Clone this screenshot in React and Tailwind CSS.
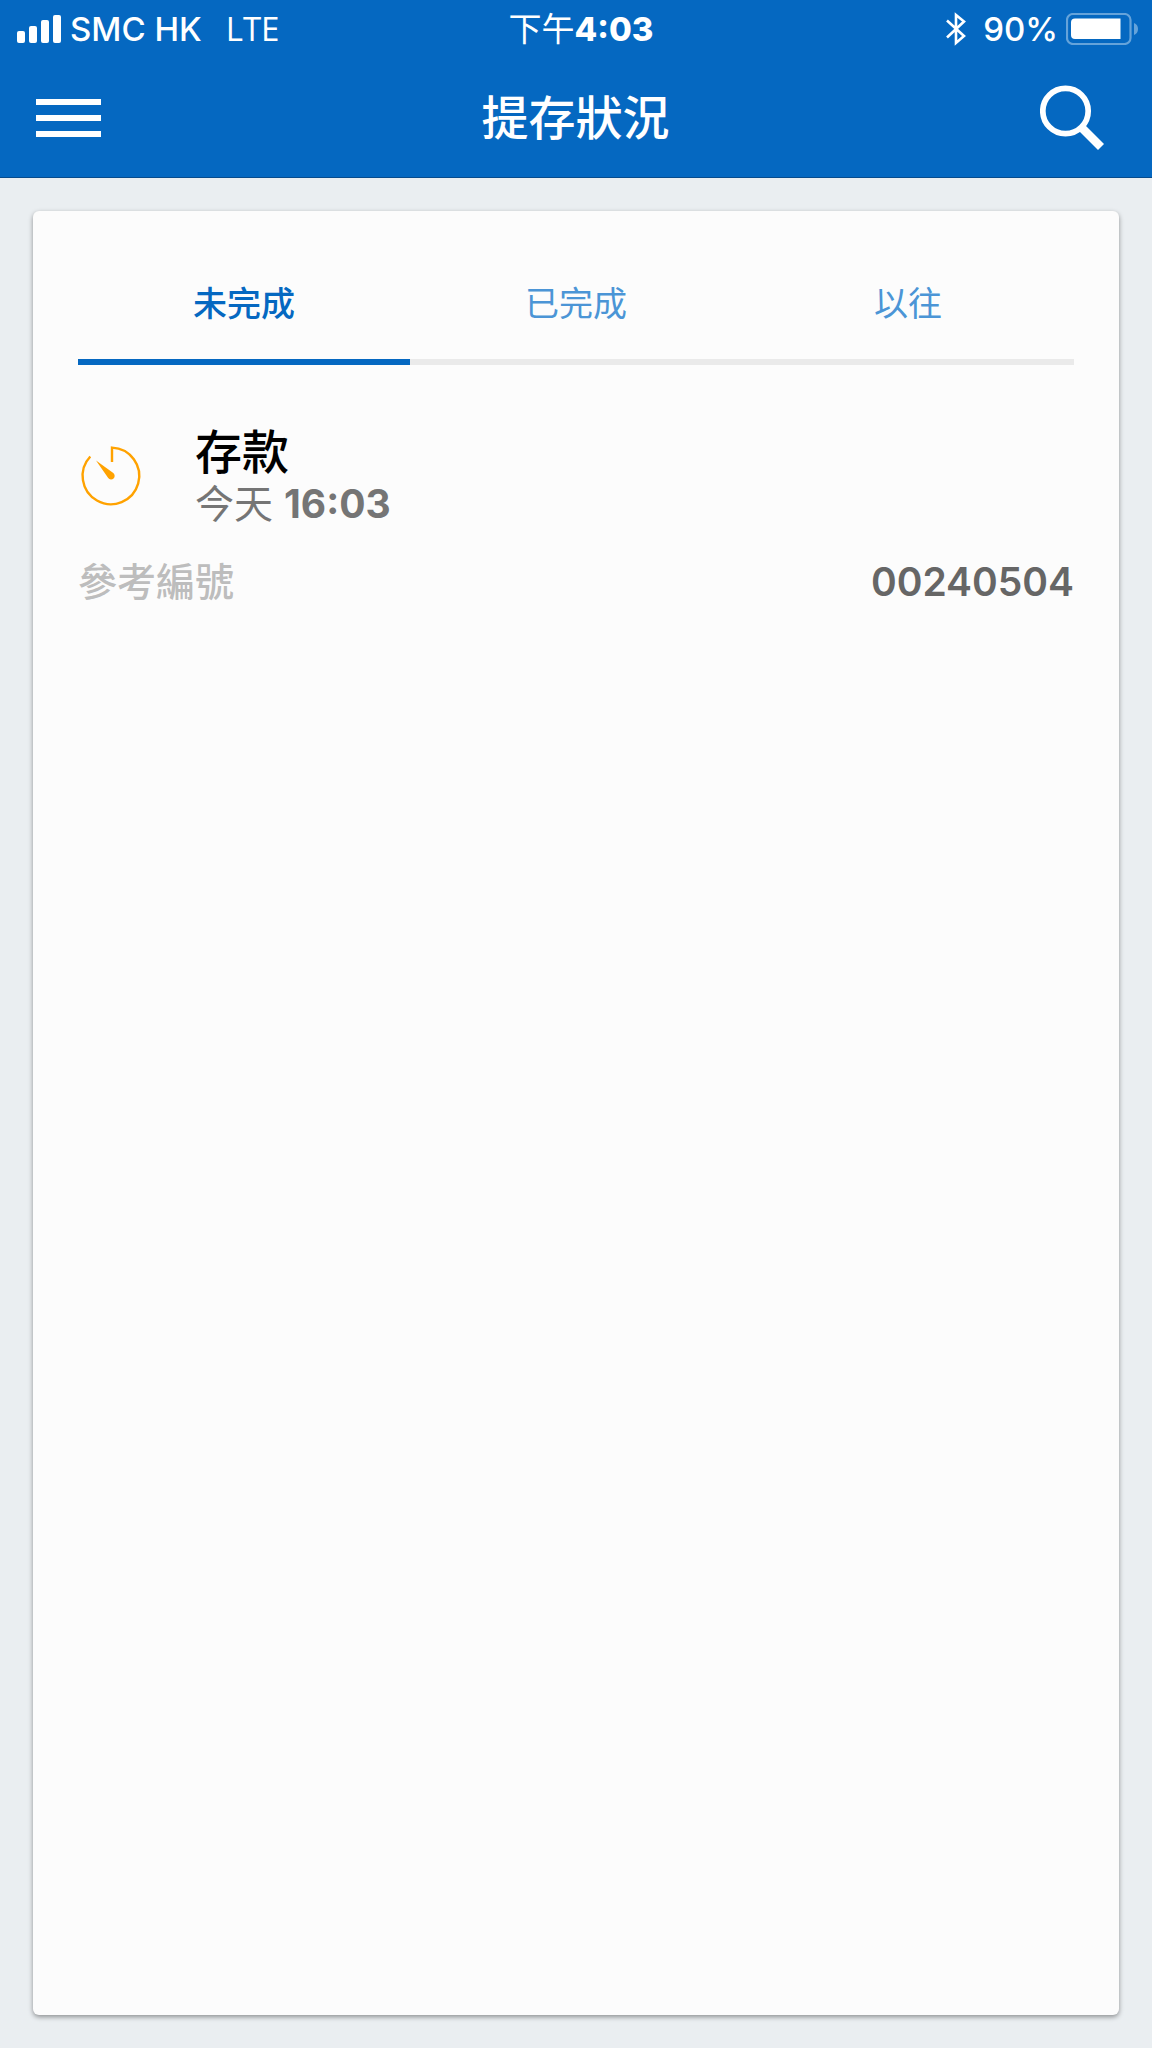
import { useState } from "react";

const FONT = "font-['Inter','Noto_Sans_CJK_TC',sans-serif]";

function StatusBar() {
  return (
    <div className="grid h-14 grid-cols-[1fr_auto_1fr] items-center pt-0.5 pl-4 pr-3.5 text-[33px] leading-10 text-white">
      <div className="flex items-center">
        <svg className="mr-2 h-7 w-[46px]" viewBox="0 0 46 28" fill="currentColor" aria-hidden="true">
          <rect x="1" y="16" width="8" height="12" rx="2" />
          <rect x="13" y="11" width="8" height="17" rx="2" />
          <rect x="25" y="5" width="8" height="23" rx="2" />
          <rect x="37" y="0" width="8" height="28" rx="2" />
        </svg>
        <span className="font-medium">SMC HK</span>
        <span className="ml-6 font-['Open_Sans','Noto_Sans',sans-serif] font-normal">LTE</span>
      </div>
      <div className="flex items-center pl-2">
        <span className="font-normal">下午</span>
        <span className="font-extrabold">4:03</span>
      </div>
      <div className="flex items-center justify-end">
        <svg className="mr-[17px] h-[34px] w-5" viewBox="0 0 20 34" fill="none" stroke="currentColor" strokeWidth="2.600" aria-hidden="true">
          <path d="M1 8.500 18 24 10 31V3L18 9.500 1 25.500" />
        </svg>
        <span className="font-medium">90%</span>
        <svg className="ml-2 h-8 w-[72px]" viewBox="0 0 72 32" aria-hidden="true">
          <rect x="1" y="1" width="63.500" height="30" rx="6" fill="none" stroke="#65a3da" strokeWidth="2.200" />
          <path d="M9 5.500H54.500V26H9Q5 26 5 22V9.500Q5 5.500 9 5.500Z" fill="#fff" />
          <path d="M68 10Q72 11.500 72 16T68 22Z" fill="#65a3da" />
        </svg>
      </div>
    </div>
  );
}

function NavBar() {
  return (
    <div className="flex h-[121px] items-center justify-between pl-9 pr-[47px] pt-0.5 text-white">
      <button type="button" aria-label="選單" className="flex w-[65px] flex-col gap-2.5">
        <span className="h-1.5 w-full bg-white" />
        <span className="h-1.5 w-full bg-white" />
        <span className="h-1.5 w-full bg-white" />
      </button>
      <h1 className="pl-2.5 text-[47px] leading-14 font-medium">提存狀況</h1>
      <button type="button" aria-label="搜尋">
        <svg className="size-[65px]" viewBox="0 0 65 65" fill="none" stroke="currentColor" aria-hidden="true">
          <circle cx="25.500" cy="26" r="22.700" strokeWidth="5.700" />
          <path d="M42 43 61 62" strokeWidth="8.500" />
        </svg>
      </button>
    </div>
  );
}

function TimerIcon() {
  return (
    <svg className="size-[66px] shrink-0" viewBox="0 0 66 66" aria-hidden="true">
      <path d="M34 19V4.600A28.300 28.300 0 1 1 12.300 13.500" fill="none" stroke="#ffa200" strokeWidth="2.400" />
      <path d="M18 17.500 35.300 30A3.600 3.600 0 1 1 30.200 35Z" fill="#ffa200" />
    </svg>
  );
}

const TABS = ["未完成", "已完成", "以往"];

export default function App() {
  const [active, setActive] = useState(0);
  return (
    <div className={`flex min-h-screen flex-col bg-[#eaeef1] ${FONT}`} lang="zh-Hant">
      <header className="border-b border-[#074b8c] bg-[#0568c1]">
        <StatusBar />
        <NavBar />
      </header>
      <main className="m-[33px] flex flex-1 flex-col rounded-md bg-[#fcfcfc] px-[45px] shadow-[0_2px_5px_rgba(0,0,0,0.4)]">
        <div role="tablist" className="grid grid-cols-3">
          {TABS.map((tab, i) => (
            <button
              key={tab}
              type="button"
              role="tab"
              aria-selected={i === active}
              onClick={() => setActive(i)}
              className={`border-b-6 pt-[69px] pb-[31px] text-[34px] leading-12 ${
                i === active
                  ? "border-[#0568c1] font-medium text-[#0568c1]"
                  : "border-[#eaeaea] font-normal text-[#4b95d6]"
              }`}
            >
              {tab}
            </button>
          ))}
        </div>
        <section role="tabpanel" className="pt-[59px]">
          <div className="flex items-center">
            <TimerIcon />
            <div className="ml-[51px]">
              <h2 className="text-[47px] leading-14 font-medium text-black">存款</h2>
              <p className="text-[39px] leading-12 font-bold text-[#757575]">
                <span className="font-normal">今天 </span>
                <span>16:03</span>
              </p>
            </div>
          </div>
          <dl className="mt-[30px] flex items-center justify-between text-[39px] leading-12">
            <dt className="font-medium text-[#bdbdbd]">參考編號</dt>
            <dd className="font-semibold text-[#666]">00240504</dd>
          </dl>
        </section>
      </main>
    </div>
  );
}
